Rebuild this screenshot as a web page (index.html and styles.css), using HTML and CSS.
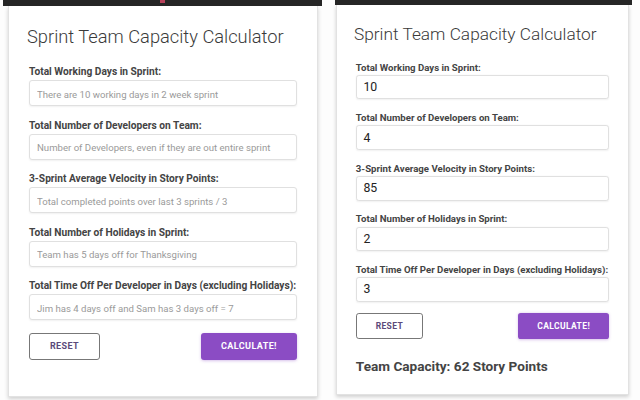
FILE: index.html
```html
<!DOCTYPE html>
<html lang="en">
    <head>
        <meta charset="UTF-8" />
        <meta name="viewport" content="width=device-width, initial-scale=1.0" />
        <title>Sprint Team Capacity Calculator</title>
        <link rel="stylesheet" href="styles.css">
    </head>
    <body>
        <!-- empty form -->
        <div class="shot shot-left">
            <div class="toolbar"><span class="dot"></span></div>
            <div class="card">
                <h1 class="title">Sprint Team Capacity Calculator</h1>
                <label class="field">
                    <span class="label">Total Working Days in Sprint:</span>
                    <input type="text" placeholder="There are 10 working days in 2 week sprint" />
                </label>
                <label class="field">
                    <span class="label">Total Number of Developers on Team:</span>
                    <input type="text" placeholder="Number of Developers, even if they are out entire sprint" />
                </label>
                <label class="field">
                    <span class="label">3-Sprint Average Velocity in Story Points:</span>
                    <input type="text" placeholder="Total completed points over last 3 sprints / 3" />
                </label>
                <label class="field">
                    <span class="label">Total Number of Holidays in Sprint:</span>
                    <input type="text" placeholder="Team has 5 days off for Thanksgiving" />
                </label>
                <label class="field">
                    <span class="label">Total Time Off Per Developer in Days (excluding Holidays):</span>
                    <input type="text" placeholder="Jim has 4 days off and Sam has 3 days off = 7" />
                </label>
                <div class="actions">
                    <button class="btn-reset">Reset</button>
                    <button class="btn-calc">Calculate!</button>
                </div>
                <div class="result"></div>
            </div>
        </div>

        <!-- filled in, after calculating -->
        <div class="shot shot-right">
            <div class="toolbar"></div>
            <div class="card card-small">
                <h1 class="title">Sprint Team Capacity Calculator</h1>
                <label class="field">
                    <span class="label">Total Working Days in Sprint:</span>
                    <input type="text" value="10" />
                </label>
                <label class="field">
                    <span class="label">Total Number of Developers on Team:</span>
                    <input type="text" value="4" />
                </label>
                <label class="field">
                    <span class="label">3-Sprint Average Velocity in Story Points:</span>
                    <input type="text" value="85" />
                </label>
                <label class="field">
                    <span class="label">Total Number of Holidays in Sprint:</span>
                    <input type="text" value="2" />
                </label>
                <label class="field">
                    <span class="label">Total Time Off Per Developer in Days (excluding Holidays):</span>
                    <input type="text" value="3" />
                </label>
                <div class="actions">
                    <button class="btn-reset">Reset</button>
                    <button class="btn-calc">Calculate!</button>
                </div>
                <div class="result">Team Capacity: 62 Story Points</div>
            </div>
        </div>
    </body>
</html>
```

FILE: styles.css
```css
body {
    margin: 0;
    height: 400px;
    background: #fdfdfd;
    font-family: Roboto, "Liberation Sans", sans-serif;
    display: flex;
    align-items: flex-start;
    overflow: hidden;
}
.shot {
    display: flex;
    flex-direction: column;
}
.shot-left {
    width: 319px;
    margin-left: 3px;
}
.shot-right {
    width: 297px;
    margin-left: 13px;
}
.toolbar {
    height: 6px;
    background: #262626;
    position: relative;
}
.shot-right .toolbar {
    height: 5px;
}
.dot {
    position: absolute;
    left: 157px;
    top: 0;
    width: 5px;
    height: 3px;
    background: #b8415a;
}
.card {
    width: 268px;
    padding: 0 20px;
    background: white;
    border: 1px solid #e2e2e2;
    border-top: none;
    box-shadow: 0 2px 4px rgba(0, 0, 0, 0.18);
    margin-left: 5px;
}
.card-small {
    zoom: 0.945;
    margin-left: 1px;
}
.title {
    margin: 19px 0 17px -2px;
    font-size: 18.3px;
    font-weight: 300;
    color: #3a3a3a;
    line-height: 24px;
    white-space: nowrap;
}
.field {
    display: block;
    margin-bottom: 13.5px;
}
.label {
    display: block;
    font-size: 10.2px;
    font-weight: 700;
    color: #444;
    line-height: 12px;
    margin-bottom: 2px;
    white-space: nowrap;
}
input {
    box-sizing: border-box;
    width: 100%;
    height: 26px;
    padding: 0 7px;
    border: 1px solid #e0e0e0;
    border-radius: 3px;
    box-shadow: 0 1px 2px rgba(0, 0, 0, 0.06);
    font-family: Roboto, "Liberation Sans", sans-serif;
    font-size: 13px;
    color: #222;
}
input::placeholder {
    font-size: 9.6px;
    color: #9a9a9a;
}
.actions {
    display: flex;
    justify-content: space-between;
    margin-top: -1px;
}
button {
    height: 27px;
    border-radius: 3px;
    font-family: Roboto, "Liberation Sans", sans-serif;
    font-size: 9px;
    font-weight: 700;
    letter-spacing: 0.4px;
    text-transform: uppercase;
    cursor: pointer;
}
.btn-reset {
    width: 71px;
    background: white;
    border: 1px solid #777;
    color: #5b4a7a;
}
.btn-calc {
    width: 96px;
    background: #8b4cc4;
    border: none;
    color: white;
    box-shadow: 0 1px 3px rgba(139, 76, 196, 0.35);
}
.result {
    margin-top: 18px;
    padding-bottom: 18px;
    font-size: 14.4px;
    font-weight: 700;
    line-height: 22px;
    color: #444;
}
```
